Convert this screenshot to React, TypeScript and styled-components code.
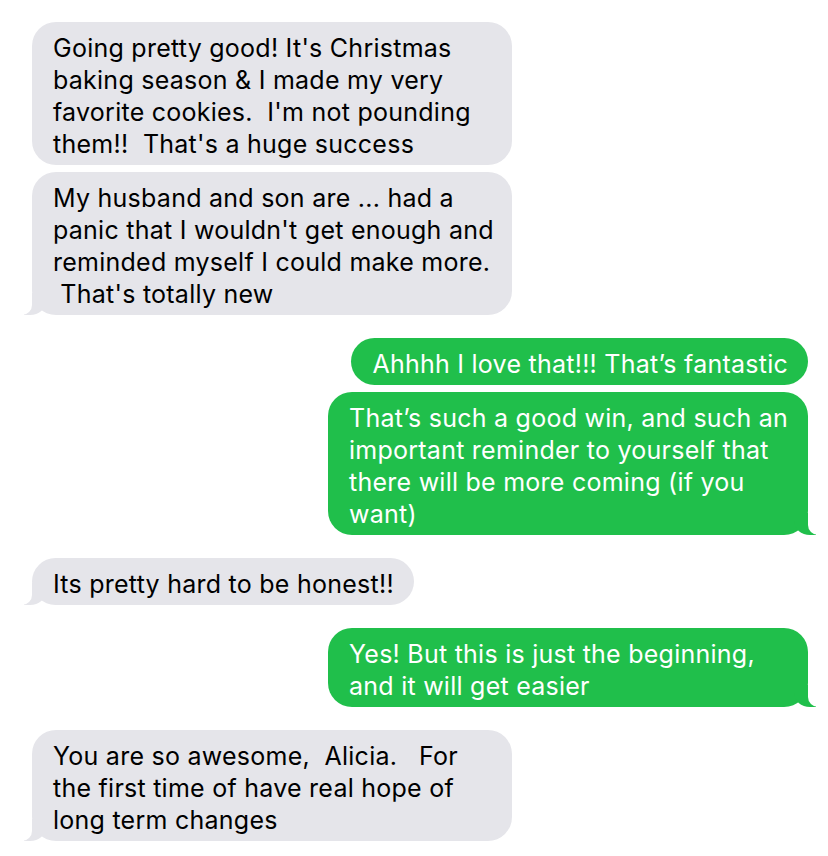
import styled, { createGlobalStyle, css } from "styled-components";

const GlobalStyle = createGlobalStyle`
  body {
    margin: 0;
    background: #fff;
    font-family: "Inter", "Liberation Sans", sans-serif;
  }
`;

type Msg = { from: "them" | "me"; text: string; wide?: boolean; tail?: boolean };

const groups: Msg[][] = [
  [
    {
      from: "them",
      wide: true,
      text: "Going pretty good! It's Christmas\nbaking season & I made my very\nfavorite cookies.  I'm not pounding\nthem!!  That's a huge success",
    },
    {
      from: "them",
      wide: true,
      tail: true,
      text: "My husband and son are ... had a\npanic that I wouldn't get enough and\nreminded myself I could make more.\n That's totally new",
    },
  ],
  [
    { from: "me", text: "Ahhhh I love that!!! That\u2019s fantastic" },
    {
      from: "me",
      wide: true,
      tail: true,
      text: "That\u2019s such a good win, and such an\nimportant reminder to yourself that\nthere will be more coming (if you\nwant)",
    },
  ],
  [{ from: "them", tail: true, text: "Its pretty hard to be honest!!" }],
  [
    {
      from: "me",
      wide: true,
      tail: true,
      text: "Yes! But this is just the beginning,\nand it will get easier",
    },
  ],
  [
    {
      from: "them",
      wide: true,
      tail: true,
      text: "You are so awesome,  Alicia.   For\nthe first time of have real hope of\nlong term changes",
    },
  ],
];

export default function App() {
  return (
    <>
      <GlobalStyle />
      <Thread>
        {groups.map((g, i) => (
          <Group key={i}>
            {g.map((m, j) => (
              <Bubble key={j} $me={m.from === "me"} $wide={!!m.wide} $tail={!!m.tail}>
                {m.text}
              </Bubble>
            ))}
          </Group>
        ))}
      </Thread>
    </>
  );
}

const Thread = styled.div`
  display: flex;
  flex-direction: column;
  gap: 23px;
  padding: 22px 20px 0 32px;
`;

const Group = styled.div`
  display: flex;
  flex-direction: column;
  gap: 7px;
`;

const Bubble = styled.div<{ $me: boolean; $wide: boolean; $tail: boolean }>`
  position: relative;
  box-sizing: border-box;
  width: ${(p) => (p.$wide ? "480px" : "fit-content")};
  padding: 10px 20px 5px 21px;
  border-radius: 24px;
  font-size: 25px;
  letter-spacing: 0.25px;
  line-height: 32px;
  white-space: pre;
  background: ${(p) => (p.$me ? "#20bf4b" : "#e5e5ea")};
  color: ${(p) => (p.$me ? "#fff" : "#000")};
  align-self: ${(p) => (p.$me ? "flex-end" : "flex-start")};

  ${(p) =>
    p.$tail &&
    (p.$me
      ? css`
          &::before {
            content: "";
            position: absolute;
            bottom: 0;
            right: -8px;
            width: 22px;
            height: 22px;
            background: #20bf4b;
            border-bottom-left-radius: 16px 14px;
          }
          &::after {
            content: "";
            position: absolute;
            bottom: 0;
            right: -12px;
            width: 12px;
            height: 24px;
            background: #fff;
            border-bottom-left-radius: 10px;
          }
        `
      : css`
          &::before {
            content: "";
            position: absolute;
            bottom: 0;
            left: -8px;
            width: 22px;
            height: 22px;
            background: #e5e5ea;
            border-bottom-right-radius: 16px 14px;
          }
          &::after {
            content: "";
            position: absolute;
            bottom: 0;
            left: -12px;
            width: 12px;
            height: 24px;
            background: #fff;
            border-bottom-right-radius: 10px;
          }
        `)}
`;
